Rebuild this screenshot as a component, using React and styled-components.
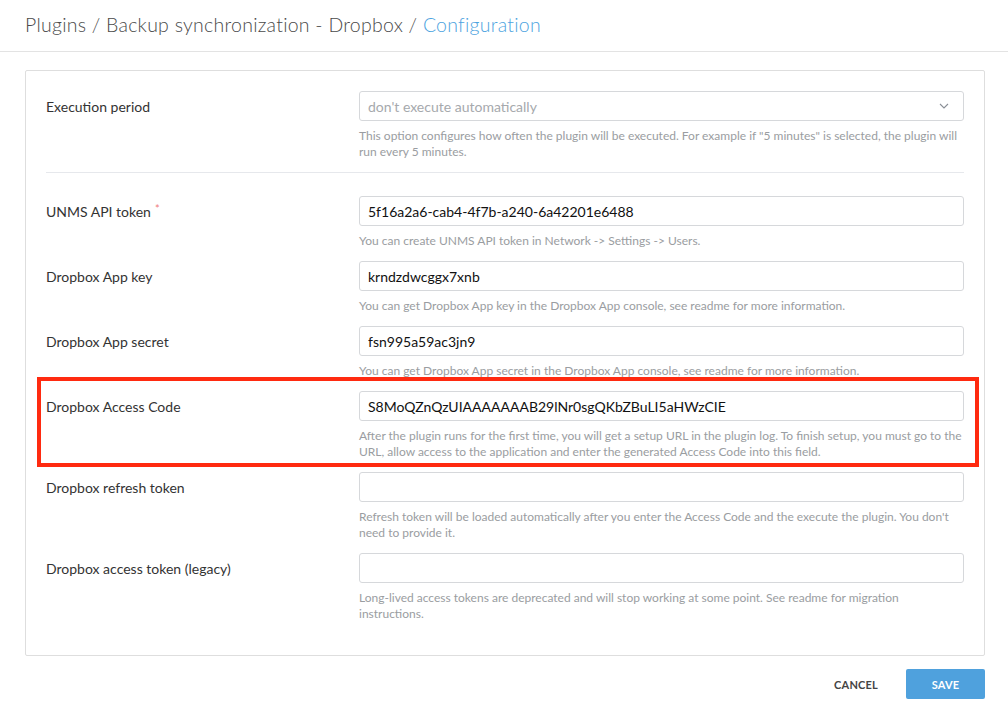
import React from "react";
import styled, { createGlobalStyle } from "styled-components";

const GlobalStyle = createGlobalStyle`
  html, body {
    margin: 0;
    padding: 0;
    background: #ffffff;
    font-family: Lato, "Open Sans", "Liberation Sans", sans-serif;
    color: #333;
  }
  * { box-sizing: border-box; }
`;

const fields = [
  {
    label: "UNMS API token",
    required: true,
    value: "5f16a2a6-cab4-4f7b-a240-6a42201e6488",
    help: "You can create UNMS API token in Network -> Settings -> Users.",
  },
  {
    label: "Dropbox App key",
    value: "krndzdwcggx7xnb",
    help: "You can get Dropbox App key in the Dropbox App console, see readme for more information.",
  },
  {
    label: "Dropbox App secret",
    value: "fsn995a59ac3jn9",
    help: "You can get Dropbox App secret in the Dropbox App console, see readme for more information.",
  },
  {
    label: "Dropbox Access Code",
    value: "S8MoQZnQzUIAAAAAAAB29lNr0sgQKbZBuLI5aHWzCIE",
    help: "After the plugin runs for the first time, you will get a setup URL in the plugin log. To finish setup, you must go to the URL, allow access to the application and enter the generated Access Code into this field.",
    marked: true,
  },
  {
    label: "Dropbox refresh token",
    value: "",
    help: "Refresh token will be loaded automatically after you enter the Access Code and the execute the plugin. You don't need to provide it.",
  },
  {
    label: "Dropbox access token (legacy)",
    value: "",
    help: "Long-lived access tokens are deprecated and will stop working at some point. See readme for migration instructions.",
  },
];

export default function App() {
  return (
    <>
      <GlobalStyle />
      <Header>
        <Crumbs>
          Plugins / Backup synchronization - Dropbox / <Current>Configuration</Current>
        </Crumbs>
      </Header>
      <Page>
        <Panel>
          <Row>
            <Label>Execution period</Label>
            <Control>
              <Select>
                <span>don't execute automatically</span>
                <svg width="10" height="6" viewBox="0 0 10 6" fill="none">
                  <path d="M1 1l4 4 4-4" stroke="#8a8f96" strokeWidth="1.1" />
                </svg>
              </Select>
              <Help>
                This option configures how often the plugin will be executed. For example if "5 minutes" is selected, the plugin will run every 5 minutes.
              </Help>
            </Control>
          </Row>
          <Divider />
          {fields.map((f) => (
            <Row key={f.label}>
              <Label>
                {f.label}
                {f.required && <Required>*</Required>}
              </Label>
              <Control>
                <Input readOnly value={f.value} />
                <Help>{f.help}</Help>
              </Control>
              {f.marked && <Highlight />}
            </Row>
          ))}
        </Panel>
        <Actions>
          <CancelButton>CANCEL</CancelButton>
          <SaveButton>SAVE</SaveButton>
        </Actions>
      </Page>
    </>
  );
}

const Header = styled.div`
  height: 52px;
  padding: 0 25px 2px;
  border-bottom: 1px solid #e3e3e3;
  display: flex;
  align-items: center;
`;

const Crumbs = styled.h1`
  margin: 0;
  font-size: 19.5px;
  font-weight: 300;
  color: #4a4a4a;
  letter-spacing: 0.25px;
`;

const Current = styled.span`
  color: #4da3e0;
`;

const Page = styled.div`
  padding: 18px 23px 0 25px;
`;

const Panel = styled.div`
  border: 1px solid #dedede;
  border-radius: 2px;
  padding: 20px 20px 21px;
`;

const Row = styled.div`
  position: relative;
  display: flex;
  align-items: flex-start;
  margin-bottom: 12px;
`;

const Label = styled.div`
  width: 313px;
  flex-shrink: 0;
  height: 30px;
  display: flex;
  align-items: center;
  font-size: 14px;
  color: #333;
`;

const Required = styled.span`
  color: #f07a7a;
  font-size: 11px;
  align-self: flex-start;
  margin: 6px 0 0 4px;
`;

const Control = styled.div`
  flex: 1;
  min-width: 0;
`;

const Select = styled.div`
  height: 30px;
  border: 1px solid #d6d8db;
  border-radius: 3px;
  padding: 0 14px 0 8px;
  display: flex;
  align-items: center;
  justify-content: space-between;
  font-size: 14px;
  color: #a6a9ad;
`;

const Input = styled.input`
  display: block;
  width: 100%;
  height: 30px;
  border: 1px solid #d6d8db;
  border-radius: 3px;
  padding: 0 8px;
  font-family: inherit;
  font-size: 14px;
  color: #111;
  background: #fff;
  outline: none;
`;

const Help = styled.p`
  margin: 7px 0 0;
  font-size: 12px;
  line-height: 16px;
  color: #9a9da1;
`;

const Divider = styled.div`
  height: 1px;
  background: #e6e8ec;
  margin: 0 0 23px;
`;

const Highlight = styled.div`
  position: absolute;
  top: -14px;
  left: -9px;
  right: -15px;
  bottom: -7px;
  border: 4px solid #ff2a10;
  pointer-events: none;
`;

const Actions = styled.div`
  display: flex;
  justify-content: flex-end;
  align-items: center;
  gap: 14px;
  margin-top: 13px;
`;

const CancelButton = styled.button`
  height: 30px;
  padding: 0 14px;
  border: none;
  background: transparent;
  font-family: inherit;
  font-size: 11px;
  font-weight: 700;
  color: #444;
  letter-spacing: 0.2px;
`;

const SaveButton = styled.button`
  width: 79px;
  height: 30px;
  border: none;
  border-radius: 2px;
  background: #4fa1dd;
  color: #fff;
  font-family: inherit;
  font-size: 11px;
  font-weight: 700;
  letter-spacing: 0.2px;
`;
